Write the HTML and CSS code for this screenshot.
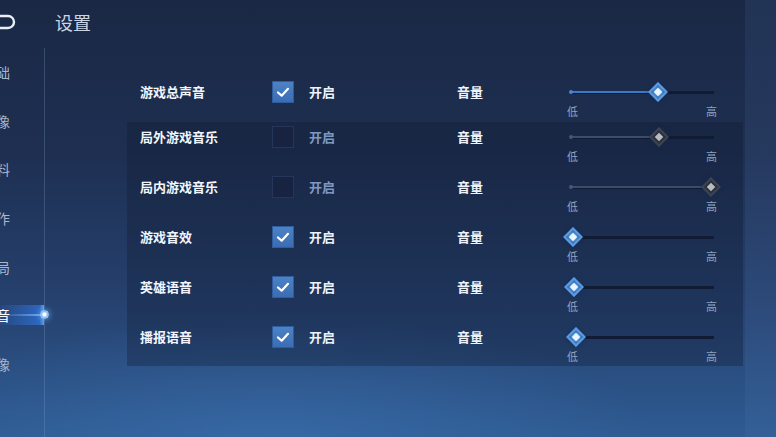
FILE: index.html
```html
<!DOCTYPE html>
<html lang="zh-CN">
<head>
    <meta charset="UTF-8">
    <meta name="viewport" content="width=device-width, initial-scale=1.0">
    <title>设置</title>
    <link rel="stylesheet" href="styles.css">
</head>
<body>
    <div class="screen">
        <!-- Left navigation, mostly scrolled off screen -->
        <div class="sidebar">
            <div class="logo">
                <svg width="20" height="20" viewBox="0 0 20 20">
                    <path d="M-4 4 H8 A6 6 0 0 1 8 16 H-4" fill="none" stroke="#e8eef8" stroke-width="2.4"/>
                </svg>
            </div>
            <div class="nav">
                <div class="nav-item">基础</div>
                <div class="nav-item">图像</div>
                <div class="nav-item">资料</div>
                <div class="nav-item">操作</div>
                <div class="nav-item">对局</div>
                <div class="nav-item active">声音<span class="nav-dot"></span></div>
                <div class="nav-item">录像</div>
            </div>
        </div>

        <div class="main">
            <div class="title">设置</div>

            <div class="list">
                <div class="row">
                    <div class="label">游戏总声音</div>
                    <div class="check on"><svg viewBox="0 0 22 22"><path d="M5.5 11.5 L9.5 15 L16.5 7.5" fill="none" stroke="#fff" stroke-width="2.4" stroke-linecap="round" stroke-linejoin="round"/></svg></div>
                    <div class="state">开启</div>
                    <div class="vol">音量</div>
                    <div class="slider">
                        <div class="track"><div class="fill" style="width: 61%"></div><div class="thumb" style="left: 61%"></div></div>
                        <div class="ends"><span>低</span><span>高</span></div>
                    </div>
                </div>

                <div class="panel">
                    <div class="row">
                        <div class="label">局外游戏音乐</div>
                        <div class="check"></div>
                        <div class="state off">开启</div>
                        <div class="vol">音量</div>
                        <div class="slider disabled">
                            <div class="track"><div class="fill" style="width: 62%"></div><div class="thumb" style="left: 62%"></div></div>
                            <div class="ends"><span>低</span><span>高</span></div>
                        </div>
                    </div>
                    <div class="row">
                        <div class="label">局内游戏音乐</div>
                        <div class="check"></div>
                        <div class="state off">开启</div>
                        <div class="vol">音量</div>
                        <div class="slider disabled">
                            <div class="track"><div class="fill" style="width: 98%"></div><div class="thumb" style="left: 98%"></div></div>
                            <div class="ends"><span>低</span><span>高</span></div>
                        </div>
                    </div>
                    <div class="row">
                        <div class="label">游戏音效</div>
                        <div class="check on"><svg viewBox="0 0 22 22"><path d="M5.5 11.5 L9.5 15 L16.5 7.5" fill="none" stroke="#fff" stroke-width="2.4" stroke-linecap="round" stroke-linejoin="round"/></svg></div>
                        <div class="state">开启</div>
                        <div class="vol">音量</div>
                        <div class="slider">
                            <div class="track"><div class="fill" style="width: 2%"></div><div class="thumb" style="left: 2%"></div></div>
                            <div class="ends"><span>低</span><span>高</span></div>
                        </div>
                    </div>
                    <div class="row">
                        <div class="label">英雄语音</div>
                        <div class="check on"><svg viewBox="0 0 22 22"><path d="M5.5 11.5 L9.5 15 L16.5 7.5" fill="none" stroke="#fff" stroke-width="2.4" stroke-linecap="round" stroke-linejoin="round"/></svg></div>
                        <div class="state">开启</div>
                        <div class="vol">音量</div>
                        <div class="slider">
                            <div class="track"><div class="fill" style="width: 3%"></div><div class="thumb" style="left: 3%"></div></div>
                            <div class="ends"><span>低</span><span>高</span></div>
                        </div>
                    </div>
                    <div class="row">
                        <div class="label">播报语音</div>
                        <div class="check on"><svg viewBox="0 0 22 22"><path d="M5.5 11.5 L9.5 15 L16.5 7.5" fill="none" stroke="#fff" stroke-width="2.4" stroke-linecap="round" stroke-linejoin="round"/></svg></div>
                        <div class="state">开启</div>
                        <div class="vol">音量</div>
                        <div class="slider">
                            <div class="track"><div class="fill" style="width: 4%"></div><div class="thumb" style="left: 4%"></div></div>
                            <div class="ends"><span>低</span><span>高</span></div>
                        </div>
                    </div>
                </div>
            </div>
        </div>
    </div>
</body>
</html>
```

FILE: styles.css
```css
* {
    box-sizing: border-box;
}

html, body {
    margin: 0;
    height: 100%;
}

body {
    font-family: "Noto Sans CJK SC", "Noto Sans", sans-serif;
    color: #e8eef8;
    overflow: hidden;
    background:
        radial-gradient(ellipse 70% 40% at 35% 100%, rgba(70, 130, 200, 0.35), transparent 70%),
        linear-gradient(180deg, #1a2845 0%, #1e2f51 35%, #264270 70%, #2e5b92 100%);
}

.screen {
    display: flex;
    height: 437px;
}

/* ---------- sidebar ---------- */

.sidebar {
    width: 45px;
    flex: none;
    display: flex;
    flex-direction: column;
}

.logo {
    height: 48px;
    padding-top: 12px;
}

.logo svg {
    display: block;
}

.nav {
    flex: 1;
    border-right: 1px solid rgba(130, 160, 200, 0.28);
    padding-top: 12px;
}

.nav-item {
    position: relative;
    height: 48.7px;
    line-height: 24px;
    font-size: 14px;
    color: #a9b7cc;
    text-align: right;
    padding-right: 34px;
    white-space: nowrap;
    direction: rtl;
}

.nav-item.active {
    color: #ffffff;
    background:
        linear-gradient(90deg, transparent 0, rgba(130, 200, 255, 0.7) 100%) no-repeat 0 11px / 100% 2px,
        linear-gradient(90deg, rgba(40, 110, 220, 0.1), rgba(50, 130, 255, 0.55) 90%, rgba(110, 180, 255, 0.8)) no-repeat 0 2px / 100% 20px;
}

.nav-dot {
    position: absolute;
    right: -5px;
    top: 7px;
    width: 9px;
    height: 9px;
    border-radius: 50%;
    border: 1.5px solid #9fd0ff;
    background: radial-gradient(circle, #ffffff 30%, #5aa8ff 70%);
    box-shadow: 0 0 6px #6ab4ff;
}

/* ---------- main ---------- */

.main {
    flex: 1;
    display: flex;
    flex-direction: column;
    background: linear-gradient(90deg, transparent 700px, rgba(90, 130, 190, 0.12) 700px);
}

.title {
    height: 44px;
    line-height: 44px;
    padding-left: 10px;
    font-size: 18px;
    color: #c9d6e8;
}

.list {
    margin-top: 33px;
    margin-left: 82px;
    width: 616px;
}

.panel {
    background: rgba(14, 24, 48, 0.32);
}

.row {
    display: flex;
    align-items: flex-start;
    height: 50px;
    padding-left: 13px;
}

.list > .row {
    height: 45px;
}

.panel .row:last-child {
    height: 44px;
}

.label {
    width: 132px;
    height: 30px;
    line-height: 30px;
    font-size: 13px;
    font-weight: 700;
    color: #f2f6fc;
}

.check {
    width: 22px;
    height: 22px;
    margin-top: 4px;
    border: 1px solid #26365a;
    background: #172340;
}

.check.on {
    border-color: #2f5c9c;
    background: linear-gradient(180deg, #4d82c6, #3a6db3);
}

.check svg {
    display: block;
    width: 20px;
    height: 20px;
}

.state {
    width: 163px;
    padding-left: 15px;
    height: 30px;
    line-height: 30px;
    font-size: 13px;
    font-weight: 700;
    color: #eef3fa;
}

.state.off {
    color: #7f98c0;
}

.vol {
    width: 109px;
    height: 30px;
    line-height: 30px;
    font-size: 13px;
    font-weight: 700;
    color: #eef3fa;
}

/* ---------- volume slider ---------- */

.slider {
    width: 152px;
}

.track {
    position: relative;
    height: 30px;
    margin: 0 4px;
    background: linear-gradient(#111b33, #111b33) no-repeat 0 14px / 100% 3px;
}

.fill {
    position: absolute;
    left: 0;
    top: 14px;
    height: 2px;
    background: #3b78c6;
}

.fill::before {
    content: "";
    position: absolute;
    left: -1px;
    top: -1px;
    width: 4px;
    height: 4px;
    border-radius: 50%;
    background: #4a86d2;
}

.thumb {
    position: absolute;
    top: 8px;
    width: 14px;
    height: 14px;
    margin-left: -7px;
    transform: rotate(45deg);
    background: #2f6bb6;
    border: 2px solid #5a9ae0;
    box-shadow: 0 0 4px rgba(20, 40, 80, 0.6);
}

.thumb::after {
    content: "";
    position: absolute;
    left: 2px;
    top: 2px;
    width: 6px;
    height: 6px;
    background: #eaf6ff;
    box-shadow: 0 0 4px #9fd4ff;
}

.slider.disabled .fill {
    background: #3c4d6c;
}

.slider.disabled .fill::before {
    background: #46587a;
}

.slider.disabled .thumb {
    background: #2b313c;
    border-color: #3c4452;
}

.slider.disabled .thumb::after {
    background: #b8bcc2;
    box-shadow: none;
}

.ends {
    display: flex;
    justify-content: space-between;
    margin-top: -3px;
    padding: 0 1px;
    font-size: 11px;
    line-height: 14px;
    color: #8ea3c2;
}
```
